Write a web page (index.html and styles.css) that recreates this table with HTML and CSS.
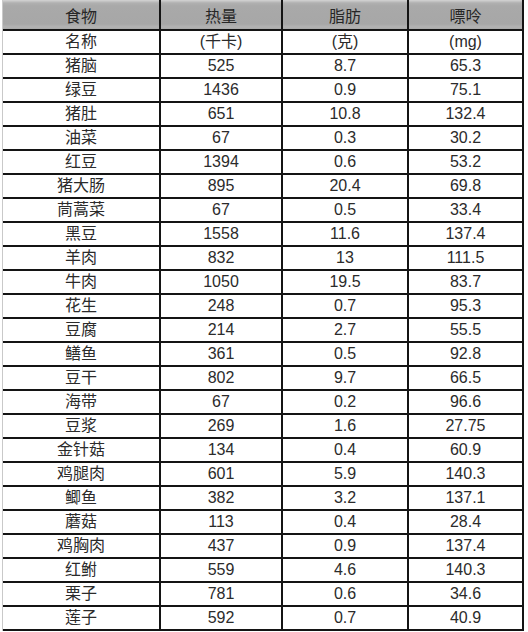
FILE: index.html
```html
<!DOCTYPE html>
<html lang="zh-CN">
<head>
<meta charset="utf-8">
<title>食物嘌呤表</title>
<link rel="stylesheet" href="styles.css">
</head>
<body>
<div class="sheet">
  <div class="grid">
    <div class="cell head">食物</div><div class="cell head">热量</div><div class="cell head">脂肪</div><div class="cell head">嘌呤</div>
    <div class="cell">名称</div><div class="cell">(千卡)</div><div class="cell">(克)</div><div class="cell">(mg)</div>
    <div class="cell">猪脑</div><div class="cell">525</div><div class="cell">8.7</div><div class="cell">65.3</div>
    <div class="cell">绿豆</div><div class="cell">1436</div><div class="cell">0.9</div><div class="cell">75.1</div>
    <div class="cell">猪肚</div><div class="cell">651</div><div class="cell">10.8</div><div class="cell">132.4</div>
    <div class="cell">油菜</div><div class="cell">67</div><div class="cell">0.3</div><div class="cell">30.2</div>
    <div class="cell">红豆</div><div class="cell">1394</div><div class="cell">0.6</div><div class="cell">53.2</div>
    <div class="cell">猪大肠</div><div class="cell">895</div><div class="cell">20.4</div><div class="cell">69.8</div>
    <div class="cell">茼蒿菜</div><div class="cell">67</div><div class="cell">0.5</div><div class="cell">33.4</div>
    <div class="cell">黑豆</div><div class="cell">1558</div><div class="cell">11.6</div><div class="cell">137.4</div>
    <div class="cell">羊肉</div><div class="cell">832</div><div class="cell">13</div><div class="cell">111.5</div>
    <div class="cell">牛肉</div><div class="cell">1050</div><div class="cell">19.5</div><div class="cell">83.7</div>
    <div class="cell">花生</div><div class="cell">248</div><div class="cell">0.7</div><div class="cell">95.3</div>
    <div class="cell">豆腐</div><div class="cell">214</div><div class="cell">2.7</div><div class="cell">55.5</div>
    <div class="cell">鳝鱼</div><div class="cell">361</div><div class="cell">0.5</div><div class="cell">92.8</div>
    <div class="cell">豆干</div><div class="cell">802</div><div class="cell">9.7</div><div class="cell">66.5</div>
    <div class="cell">海带</div><div class="cell">67</div><div class="cell">0.2</div><div class="cell">96.6</div>
    <div class="cell">豆浆</div><div class="cell">269</div><div class="cell">1.6</div><div class="cell">27.75</div>
    <div class="cell">金针菇</div><div class="cell">134</div><div class="cell">0.4</div><div class="cell">60.9</div>
    <div class="cell">鸡腿肉</div><div class="cell">601</div><div class="cell">5.9</div><div class="cell">140.3</div>
    <div class="cell">鲫鱼</div><div class="cell">382</div><div class="cell">3.2</div><div class="cell">137.1</div>
    <div class="cell">蘑菇</div><div class="cell">113</div><div class="cell">0.4</div><div class="cell">28.4</div>
    <div class="cell">鸡胸肉</div><div class="cell">437</div><div class="cell">0.9</div><div class="cell">137.4</div>
    <div class="cell">红鲋</div><div class="cell">559</div><div class="cell">4.6</div><div class="cell">140.3</div>
    <div class="cell">栗子</div><div class="cell">781</div><div class="cell">0.6</div><div class="cell">34.6</div>
    <div class="cell">莲子</div><div class="cell">592</div><div class="cell">0.7</div><div class="cell">40.9</div>
  </div>
</div>
</body>
</html>
```
FILE: styles.css
```css
html, body {
  margin: 0;
  padding: 0;
  background: #ffffff;
}

.sheet {
  margin-left: 2px;
  border-left: 1px solid #c9c9c9;
  width: 521px;
}

.grid {
  display: grid;
  grid-template-columns: 158px 122px 126px 115px;
  font-family: "Liberation Sans", "Noto Sans CJK SC", sans-serif;
  font-size: 16px;
  color: #2b2b2b;
}

.cell {
  box-sizing: border-box;
  height: 24px;
  border-right: 2px solid #141414;
  border-bottom: 2px solid #141414;
  display: flex;
  align-items: center;
  justify-content: center;
  line-height: 22px;
  white-space: nowrap;
}

.head {
  height: 31px;
  padding-top: 5px;
  color: #262626;
  background: linear-gradient(to bottom, #d4d4d4 0px, #b0b0b0 3px, #a9a9a9 6px, #a7a7a7 24px, #b3b3b3 27px, #a9a9a9 29px);
}
```
